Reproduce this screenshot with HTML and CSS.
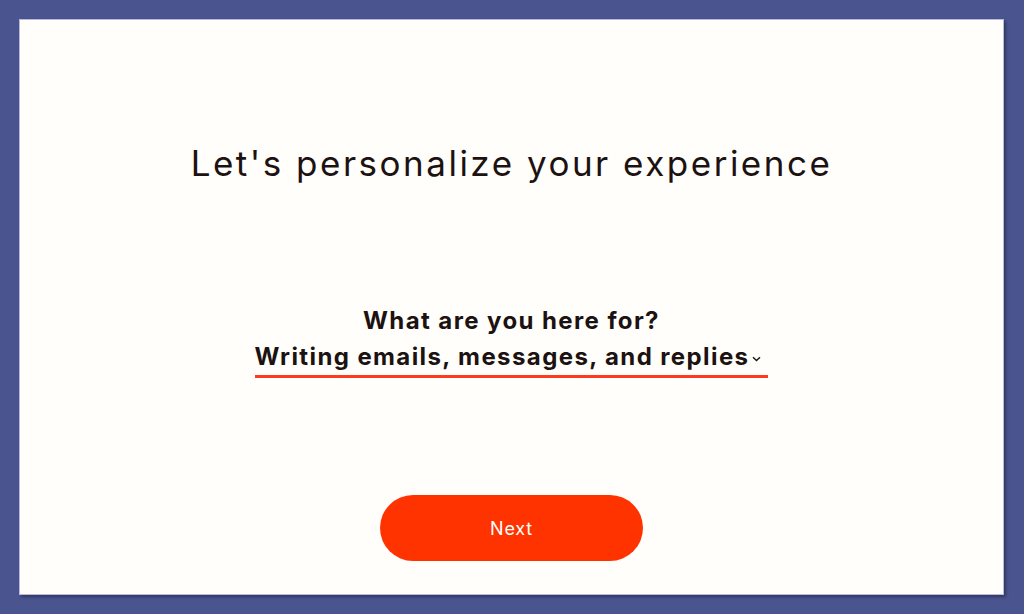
FILE: index.html
```html
<!DOCTYPE html>
<html lang="en">
<head>
<meta charset="utf-8">
<title>Personalize</title>
<link rel="stylesheet" href="styles.css">
</head>
<body>
<main class="card">
  <h1 class="title">Let's personalize your experience</h1>
  <section class="question">
    <p class="label">What are you here for?</p>
    <div class="select">
      <span class="value">Writing emails, messages, and replies</span>
      <svg class="chev" width="9" height="6" viewBox="0 0 9 6"><path d="M1 1.2 L4.5 4.6 L8 1.2" fill="none" stroke="#1c1212" stroke-width="1.4"/></svg>
    </div>
  </section>
  <button class="next">Next</button>
</main>
</body>
</html>
```
FILE: styles.css
```css
html, body { margin: 0; padding: 0; }
body {
  background: #4a5590;
  width: 1024px;
  height: 614px;
  overflow: hidden;
  padding: 19px 20px 19px 19px;
  box-sizing: border-box;
}
.card {
  height: 576px;
  box-sizing: border-box;
  background: #fffefa;
  border: 1px solid #b7bbe0;
  box-shadow: 2px 2px 3px rgba(0, 0, 0, 0.35);
  display: flex;
  flex-direction: column;
  align-items: center;
  color: #1c1212;
}
.title {
  margin: 118px 0 0;
  font-family: "Inter", sans-serif;
  font-weight: 400;
  font-size: 35px;
  line-height: 50px;
  letter-spacing: 2.5px;
}
.question {
  margin-top: 114px;
  display: flex;
  flex-direction: column;
  align-items: center;
  font-family: "Inter", sans-serif;
  font-weight: 700;
  font-size: 24px;
  letter-spacing: 1.4px;
}
.label {
  margin: 0;
  line-height: 37px;
}
.select {
  display: flex;
  align-items: center;
  gap: 3px;
  padding-right: 7px;
  border-bottom: 3px solid #ff3b1f;
  line-height: 36px;
}
.chev { margin-top: 4px; }
.next {
  margin-top: 117px;
  width: 263px;
  height: 66px;
  border: none;
  border-radius: 33px;
  background: #ff3300;
  color: #ffffff;
  font-family: "Inter", sans-serif;
  font-size: 18px;
  font-weight: 400;
  letter-spacing: 0.8px;
}
```
